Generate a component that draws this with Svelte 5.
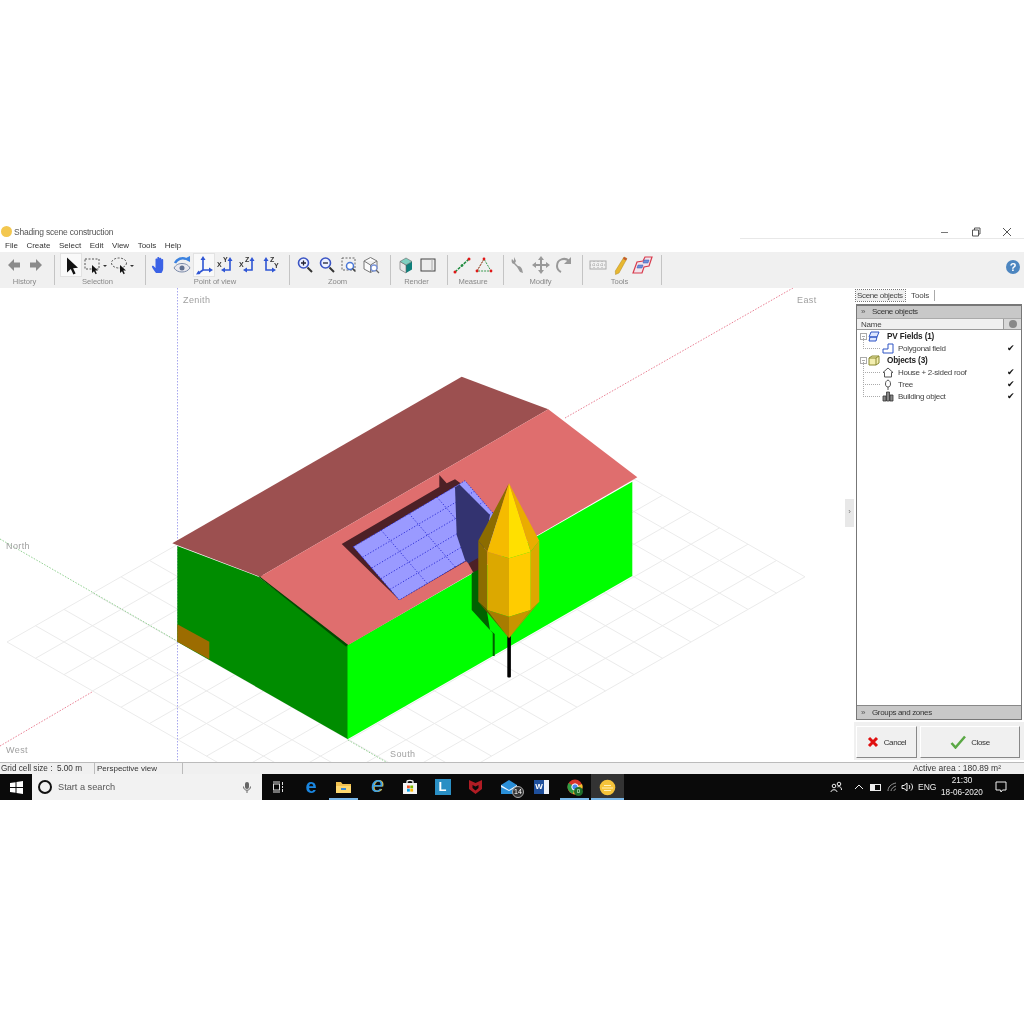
<script>
  // floor grid of the 3d scene, 16 x 12 cells
  const origin = [7, 642];
  const u = [28.5, -16.3];
  const v = [28.5, 16.3];
  const pt = (a, b) => [origin[0] + a * u[0] + b * v[0], origin[1] + a * u[1] + b * v[1]];
  const gridLines = [];
  for (let a = 0; a <= 16; a++) gridLines.push([pt(a, 0), pt(a, 12)]);
  for (let b = 0; b <= 12; b++) gridLines.push([pt(0, b), pt(16, b)]);

  // pv panel corners
  const A = [353.3, 546.7];
  const B = [465, 480.7];
  const D = [399.3, 600];
  const panelLines = [];
  const mix = (i, j) => [A[0] + i * (B[0] - A[0]) + j * (D[0] - A[0]), A[1] + i * (B[1] - A[1]) + j * (D[1] - A[1])];
  for (let i = 1; i < 4; i++) panelLines.push([mix(i / 4, 0), mix(i / 4, 1)]);
  for (let j = 1; j < 5; j++) panelLines.push([mix(0, j / 5), mix(1, j / 5)]);

  const menus = ["File", "Create", "Select", "Edit", "View", "Tools", "Help"];

  const treeRows = [
    { label: "PV Fields (1)", bold: true, kind: "pv" },
    { label: "Polygonal field", kind: "poly", check: true },
    { label: "Objects (3)", bold: true, kind: "obj" },
    { label: "House + 2-sided roof", kind: "house", check: true },
    { label: "Tree", kind: "tree", check: true },
    { label: "Building object", kind: "building", check: true }
  ];
</script>

{#snippet cursor(x, y)}
  <path d="M{x} {y}l0 8 2-1.8 1.6 3 1.2-.7-1.5-2.9 2.7-.2z" fill="#111" />
{/snippet}

<div class="screen">
  <div class="titlebar">
    <span class="app-dot"></span>
    <span class="title">Shading scene construction</span>
    <div class="win-btns">
      <svg width="10" height="10" viewBox="0 0 10 10"><path d="M1 5.5h7" stroke="#777" /></svg>
      <svg width="10" height="10" viewBox="0 0 10 10"><path d="M1.5 3h6v6h-6zM3.5 3V1h5.500v6H7.500" fill="none" stroke="#555" /></svg>
      <svg width="10" height="10" viewBox="0 0 10 10"><path d="M1 1l8 8M9 1l-8 8" stroke="#555" /></svg>
    </div>
  </div>

  <div class="menubar">
    {#each menus as name}
      <span>{name}</span>
    {/each}
  </div>

  <div class="toolbar">
    <div class="group w-history">
      <div class="icons">
        <div class="tool"><svg width="22" height="22" viewBox="0 0 22 22"><path d="M5 11l6-6v3.500h6v5h-6V17z" fill="#8b8b8b" /></svg></div>
        <div class="tool"><svg width="22" height="22" viewBox="0 0 22 22"><path d="M17 11l-6-6v3.500H5v5h6V17z" fill="#8b8b8b" /></svg></div>
      </div>
      <span class="group-label">History</span>
    </div>
    <div class="sep"></div>
    <div class="group w-selection">
      <div class="icons">
        <div class="tool active"><svg width="22" height="22" viewBox="0 0 22 22"><path d="M7 3.500v15l3.800-3.500 2.600 5.500 2.200-1-2.500-5.300 4.900-.4z" fill="#111" /></svg></div>
        <div class="tool"><svg width="22" height="22" viewBox="0 0 22 22"><rect x="3" y="5" width="14" height="10" fill="none" stroke="#555" stroke-dasharray="2 1.500" />{@render cursor(10, 11)}</svg></div>
        <div class="drop"></div>
        <div class="tool"><svg width="22" height="22" viewBox="0 0 22 22"><ellipse cx="10" cy="9" rx="7.500" ry="5" fill="none" stroke="#555" stroke-dasharray="2 1.500" />{@render cursor(11, 11)}</svg></div>
        <div class="drop"></div>
      </div>
      <span class="group-label">Selection</span>
    </div>
    <div class="sep"></div>
    <div class="group w-pov">
      <div class="icons">
        <div class="tool"><svg width="22" height="22" viewBox="0 0 22 22"><path d="M7 19c-1.500-2-3.500-4.500-4-6-.4-1.200 1-1.800 1.800-.8L6.500 14V5.500c0-1.300 1.800-1.300 1.800 0V4c0-1.300 2-1.300 2 0v.8c0-1.300 2-1.300 2 0V6c0-1.200 1.900-1.200 1.900 0v8c0 2-.7 3.500-1.700 5z" fill="#3b62e6" /></svg></div>
        <div class="tool"><svg width="22" height="22" viewBox="0 0 22 22"><path d="M3 14c2-3.500 5-4.500 8-4.500s6 1 8 4.500c-2 3-5 4-8 4s-6-1-8-4z" fill="#e8e8ee" stroke="#7a8aa8" /><circle cx="11" cy="14" r="2.500" fill="#5f6f8f" /><path d="M4 9c2-4 7-6 11-4" fill="none" stroke="#3b82e0" stroke-width="2.500" /><path d="M19 8V2l-6 3z" fill="#3b82e0" /></svg></div>
        <div class="tool active"><svg width="22" height="22" viewBox="0 0 22 22"><path d="M10 5v11M10 16h7M10 16l-5 3.500" fill="none" stroke="#2f55d4" stroke-width="1.600" /><path d="M10 2l2.500 4h-5zM20 16l-4-2.500v5zM3 20.500l4.500-.5-2-3.500z" fill="#2f55d4" /></svg></div>
        <div class="tool"><svg width="22" height="22" viewBox="0 0 22 22"><path d="M15 6v10H9" fill="none" stroke="#2f55d4" stroke-width="1.600" /><path d="M15 3l2.500 4h-5zM6 16l4-2.500v5z" fill="#2f55d4" /><text x="2" y="13" class="axis">X</text><text x="8" y="8" class="axis">Y</text></svg></div>
        <div class="tool"><svg width="22" height="22" viewBox="0 0 22 22"><path d="M15 6v10H9" fill="none" stroke="#2f55d4" stroke-width="1.600" /><path d="M15 3l2.500 4h-5zM6 16l4-2.500v5z" fill="#2f55d4" /><text x="2" y="13" class="axis">X</text><text x="8" y="8" class="axis">Z</text></svg></div>
        <div class="tool"><svg width="22" height="22" viewBox="0 0 22 22"><path d="M7 6v10h7" fill="none" stroke="#2f55d4" stroke-width="1.600" /><path d="M7 3l2.500 4h-5zM17 16l-4-2.500v5z" fill="#2f55d4" /><text x="11" y="8" class="axis">Z</text><text x="15" y="14" class="axis">Y</text></svg></div>
      </div>
      <span class="group-label">Point of view</span>
    </div>
    <div class="sep"></div>
    <div class="group w-zoom">
      <div class="icons">
        <div class="tool"><svg width="22" height="22" viewBox="0 0 22 22"><circle cx="9.500" cy="9" r="5" fill="#eef2ff" stroke="#3b55c4" stroke-width="1.600" /><path d="M7 9h5M9.500 6.500v5" stroke="#223" stroke-width="1.300" /><path d="M13.500 13.500l4.500 4.500" stroke="#333" stroke-width="2" /></svg></div>
        <div class="tool"><svg width="22" height="22" viewBox="0 0 22 22"><circle cx="9.500" cy="9" r="5" fill="#eef2ff" stroke="#3b55c4" stroke-width="1.600" /><path d="M7 9h5" stroke="#223" stroke-width="1.300" /><path d="M13.500 13.500l4.500 4.500" stroke="#333" stroke-width="2" /></svg></div>
        <div class="tool"><svg width="22" height="22" viewBox="0 0 22 22"><rect x="4" y="4" width="13" height="12" fill="none" stroke="#666" stroke-dasharray="2 1.500" /><circle cx="12" cy="12" r="3.500" fill="#fff" stroke="#4a78d8" stroke-width="1.500" /><path d="M14.500 14.500l3 3" stroke="#444" stroke-width="1.500" /></svg></div>
        <div class="tool"><svg width="22" height="22" viewBox="0 0 22 22"><path d="M4 7l6.500-3.500L17 7v8l-6.500 3.500L4 15zM4 7l6.500 4L17 7M10.500 11v7.500" fill="#fafafa" stroke="#777" /><circle cx="14" cy="14" r="3" fill="#fff" stroke="#7a94d8" stroke-width="1.300" /><path d="M16 16l3 3" stroke="#666" stroke-width="1.300" /></svg></div>
      </div>
      <span class="group-label">Zoom</span>
    </div>
    <div class="sep"></div>
    <div class="group w-render">
      <div class="icons">
        <div class="tool"><svg width="22" height="22" viewBox="0 0 22 22"><path d="M11 11l6-3.500v8L11 19z" fill="#0e7f7a" /><path d="M11 11L5 7.500v8L11 19z" fill="#e8e8e8" stroke="#666" stroke-width=".6" /><path d="M5 7.500L11 4l6 3.500L11 11z" fill="#7fd0c0" stroke="#666" stroke-width=".6" /></svg></div>
        <div class="tool"><svg width="22" height="22" viewBox="0 0 22 22"><rect x="4" y="5" width="14" height="12" fill="#ededed" stroke="#444" /><path d="M15 5v12" stroke="#aaa" /></svg></div>
      </div>
      <span class="group-label">Render</span>
    </div>
    <div class="sep"></div>
    <div class="group w-measure">
      <div class="icons">
        <div class="tool"><svg width="22" height="22" viewBox="0 0 22 22"><path d="M4 18L18 5" stroke="#1c8a3c" stroke-width="1.500" stroke-dasharray="3 1" /><circle cx="4" cy="18" r="1.500" fill="#e01818" /><circle cx="18" cy="5" r="1.500" fill="#e01818" /><circle cx="11" cy="11.500" r="1.300" fill="#1c8a3c" /></svg></div>
        <div class="tool"><svg width="22" height="22" viewBox="0 0 22 22"><path d="M11 5L4 17h14z" fill="none" stroke="#3a9a50" stroke-dasharray="2 1" /><path d="M11 5L4 17" stroke="#d84848" stroke-dasharray="2 1" /><circle cx="11" cy="5" r="1.400" fill="#e01818" /><circle cx="4" cy="17" r="1.400" fill="#e01818" /><circle cx="18" cy="17" r="1.400" fill="#e01818" /></svg></div>
      </div>
      <span class="group-label">Measure</span>
    </div>
    <div class="sep"></div>
    <div class="group w-modify">
      <div class="icons">
        <div class="tool"><svg width="22" height="22" viewBox="0 0 22 22"><path d="M6 3l2 4-1 2 3 3c2 0 3 1 4 3l1 4-3-1-3-5-3-3c-2 0-3-3-2-5l2 2z" fill="#999" /></svg></div>
        <div class="tool"><svg width="22" height="22" viewBox="0 0 22 22"><path d="M11 4v14M4 11h14" stroke="#999" stroke-width="2" /><path d="M11 2l3 4H8zM11 20l3-4H8zM2 11l4-3v6zM20 11l-4-3v6z" fill="#999" /></svg></div>
        <div class="tool"><svg width="22" height="22" viewBox="0 0 22 22"><path d="M17 7c-4-4-12-2-12 5 0 3 2 5 4 6" fill="none" stroke="#999" stroke-width="2" /><path d="M19 3v7h-7z" fill="#999" /></svg></div>
      </div>
      <span class="group-label">Modify</span>
    </div>
    <div class="sep"></div>
    <div class="group w-tools">
      <div class="icons">
        <div class="tool"><svg width="22" height="22" viewBox="0 0 22 22"><rect x="3" y="7" width="16" height="8" fill="none" stroke="#aaa" /><path d="M7 7v8M11 7v8M15 7v8M3 11h16" stroke="#aaa" stroke-dasharray="1 1" /></svg></div>
        <div class="tool"><svg width="22" height="22" viewBox="0 0 22 22"><path d="M15 3l3 1.500L10 19l-3.500 1.500-.2-3.500z" fill="#e8b830" stroke="#b08820" stroke-width=".5" /><path d="M15 3l3 1.500-1 2-3-1.500z" fill="#c65a30" /></svg></div>
        <div class="tool"><svg width="22" height="22" viewBox="0 0 22 22"><path d="M2 19l4-11 6-1 2-4h7l-3 9-5 1-2 6z" fill="#f2e4ec" stroke="#d83a4c" stroke-width="1.200" /><path d="M7 11h5l-1 3H6zM13 6h5l-1 3h-5z" fill="#6d8fd8" stroke="#3a55b0" stroke-width=".5" /></svg></div>
      </div>
      <span class="group-label">Tools</span>
    </div>
    <div class="sep"></div>
    <div class="help">?</div>
  </div>

  <div class="main">
    <div class="canvas">
      <svg class="scene" width="854" height="474" viewBox="0 288 854 474">
        {#each gridLines as [p, q]}
          <line x1={p[0]} y1={p[1]} x2={q[0]} y2={q[1]} stroke="#ebebeb" />
        {/each}

        <line x1="177.500" y1="288" x2="177.500" y2="762" stroke="#a6a6ee" stroke-dasharray="1.500 1.500" />
        <line x1="0" y1="539" x2="177" y2="641" stroke="#8fd08f" stroke-dasharray="1.500 1.500" />
        <line x1="348" y1="740" x2="386" y2="762" stroke="#8fd08f" stroke-dasharray="1.500 1.500" />
        <line x1="0" y1="746" x2="92" y2="692" stroke="#ea7f94" stroke-dasharray="1.500 1.500" />
        <line x1="565" y1="418" x2="793" y2="288" stroke="#ea7f94" stroke-dasharray="1.500 1.500" />

        <text x="183" y="303" class="axis-label">Zenith</text>
        <text x="797" y="303" class="axis-label">East</text>
        <text x="6" y="549" class="axis-label">North</text>
        <text x="6" y="753" class="axis-label">West</text>
        <text x="390" y="757" class="axis-label">South</text>

        <!-- house -->
        <polygon points="177.300,546 258.300,576.700 348,645 348,739.300 177.300,641.700" fill="#008c00" />
        <polygon points="258.300,576.700 262,575 349,645 346,646.500" fill="#004a00" />
        <polygon points="347.500,645 632.300,481.700 632.300,576 347.500,739.300" fill="#00ff00" />
        <polygon points="177.300,624.300 209.300,641.700 209.300,659.300 177.300,641.700" fill="#9c6c00" />
        <polygon points="172.300,543.300 461.700,376.700 548.300,409.300 260,576.700" fill="#9c5050" />
        <polygon points="260,576.700 548.300,409.300 637.300,477.300 348.300,645" fill="#df6e6e" />

        <!-- panel with its shadows -->
        <polygon points="341.700,544 439.300,487 439.300,475 446.700,483.300 455,479.300 470,490 470,559 399.300,600" fill="#4d2026" />
        <polygon points="353.300,546.700 465,480.700 511,534 399.300,600" fill="#9a9aff" />
        {#each panelLines as [p, q]}
          <line x1={p[0]} y1={p[1]} x2={q[0]} y2={q[1]} stroke="#3030d8" stroke-dasharray="1.200 1.800" />
        {/each}
        <polygon points="353.300,546.700 465,480.700 511,534 399.300,600" fill="none" stroke="#3030d8" stroke-dasharray="1.200 1.800" />
        <polygon points="455,487.300 459.500,484.500 490,515 480,570 468.300,563.300 465,560 456.700,535" fill="#333370" />
        <polygon points="468.300,563.500 478,558 482,572 473,572" fill="#4d2026" />
        <polygon points="471.700,573 480,569 490,630 494.700,634 494.700,656 492.700,656 492.700,633 471.700,610" fill="#006200" />

        <!-- tree -->
        <rect x="507.300" y="636" width="3.600" height="41.500" rx="1" fill="#000" />
        <polygon points="509,483.300 478.300,540.700 487.300,551.700" fill="#8c6c00" />
        <polygon points="509,483.300 487.300,551.700 509,558.300" fill="#f5bb00" />
        <polygon points="509,483.300 509,558.300 530.700,551.700" fill="#ffe000" />
        <polygon points="509,483.300 530.700,551.700 539.300,540.700" fill="#eaad00" />
        <polygon points="478.300,540.700 487.300,551.700 487.300,610 478.300,601.700" fill="#8c6c00" />
        <polygon points="487.300,551.700 509,558.300 509,616.700 487.300,610" fill="#dca800" />
        <polygon points="509,558.300 530.700,551.700 530.700,610 509,616.700" fill="#ffcc00" />
        <polygon points="530.700,551.700 539.300,540.700 539.300,601.700 530.700,610" fill="#dca800" />
        <polygon points="478.300,601.700 487.300,610 509,638.300" fill="#6a5000" />
        <polygon points="487.300,610 509,616.700 509,638.300" fill="#a87c00" />
        <polygon points="509,616.700 530.700,610 509,638.300" fill="#c89400" />
        <polygon points="530.700,610 539.300,601.700 509,638.300" fill="#b88c00" />
      </svg>
      <div class="collapse-handle">›</div>
    </div>

    <div class="side">
      <div class="tabs">
        <span class="tab current">Scene objects</span>
        <span class="tab tools-tab">Tools</span>
      </div>
      <div class="frame">
        <div class="frame-head"><span class="chev">»</span>Scene objects</div>
        <div class="name-row">
          <span>Name</span>
          <span class="name-btn"><span class="ball"></span></span>
        </div>
        <div class="tree">
          {#each treeRows as row}
            <div class="tree-row" class:parent={row.bold}>
              <span class="twig" class:root={row.bold}>
                {#if row.bold}<span class="plus-box"></span>{/if}
              </span>
              <svg class="tree-icon" width="12" height="11" viewBox="0 0 12 11">
                {#if row.kind === "pv"}
                  <path d="M3 1h8L9 6H1zM2 6h7L8 10H1z" fill="#dde6ff" stroke="#2f55c4" />
                {:else if row.kind === "poly"}
                  <path d="M1 10V6h5V1h5v9z" fill="#fff" stroke="#2f55c4" />
                {:else if row.kind === "obj"}
                  <path d="M1 3l3-2h7v7l-3 2H1zM1 3h7v7M8 3l3-2" fill="#f3eeb0" stroke="#8a8a30" />
                {:else if row.kind === "house"}
                  <path d="M6 1L1 5.500h1.500V10h7V5.500H11z" fill="#fff" stroke="#555" />
                {:else if row.kind === "tree"}
                  <path d="M6 1c2 1 2.500 2 2.500 4S7.500 8 6 8 3.500 7 3.500 5 4 2 6 1zM6 8v3" fill="#fff" stroke="#555" />
                {:else}
                  <path d="M1 5h3v5H1zM4.500 1h3v9h-3zM8 4h3v6H8z" fill="#888" stroke="#333" stroke-width=".8" />
                {/if}
              </svg>
              <span class="tree-label">{row.label}</span>
              {#if row.check}<span class="check">✔</span>{/if}
            </div>
          {/each}
        </div>
        <div class="frame-foot"><span class="chev">»</span>Groups and zones</div>
      </div>
      <div class="actions">
        <div class="action cancel">
          <svg width="12" height="12" viewBox="0 0 12 12"><path d="M2 2l8 8M10 2l-8 8" stroke="#e01010" stroke-width="3" /></svg>
          <span>Cancel</span>
        </div>
        <div class="action close">
          <svg width="16" height="14" viewBox="0 0 16 14"><path d="M1.500 8l4 4.500L15 1.500" fill="none" stroke="#5aa845" stroke-width="2.500" /></svg>
          <span>Close</span>
        </div>
      </div>
    </div>
  </div>

  <div class="statusbar">
    <span class="cell c-grid">Grid cell size :  5.00 m</span>
    <span class="cell c-view">Perspective view</span>
    <span class="cell c-area">Active area : 180.89 m²</span>
  </div>

  <div class="taskbar">
    <div class="start">
      <svg width="13" height="13" viewBox="0 0 13 13"><path d="M0 2l5.500-.8V6H0zM6.500 1l6.500-1v6H6.500zM0 7h5.500v4.800L0 11zM6.500 7H13v6l-6.500-1z" fill="#fff" /></svg>
    </div>
    <div class="search">
      <span class="ring"></span>
      <span class="search-text">Start a search</span>
      <svg class="mic" width="10" height="13" viewBox="0 0 10 13"><rect x="3" y="1" width="4" height="7" rx="2" fill="#666" /><path d="M1.500 5.500c0 5 7 5 7 0M5 9.500V12" fill="none" stroke="#666" /></svg>
    </div>
    <div class="task-icons">
      <div class="tb"><svg width="12" height="12" viewBox="0 0 12 12"><path d="M1 1h7M1 11h7" stroke="#ddd" /><rect x="1.500" y="3" width="6" height="6" fill="none" stroke="#ddd" /><path d="M10.500 1v3M10.500 5v2M10.500 8v3" stroke="#ddd" /></svg></div>
      <div class="tb"><span class="edge">e</span></div>
      <div class="tb open"><svg width="17" height="14" viewBox="0 0 17 14"><path d="M1 2h5l1.500 2H16v9H1z" fill="#f0c050" /><path d="M1 6h15v7H1z" fill="#ffd970" /><path d="M6 8h5v2H6z" fill="#3a8ad8" /></svg></div>
      <div class="tb"><span class="ie">e</span></div>
      <div class="tb"><svg width="16" height="16" viewBox="0 0 16 16"><path d="M1 4h14v11H1z" fill="#f4f4f4" /><path d="M5 5V2.500C5 1 11 1 11 2.500V5" fill="none" stroke="#f4f4f4" stroke-width="1.300" /><rect x="5" y="6.500" width="2.800" height="2.800" fill="#f25022" /><rect x="8.300" y="6.500" width="2.800" height="2.800" fill="#7fba00" /><rect x="5" y="9.800" width="2.800" height="2.800" fill="#00a4ef" /><rect x="8.300" y="9.800" width="2.800" height="2.800" fill="#ffb900" /></svg></div>
      <div class="tb"><span class="l-tile">L</span></div>
      <div class="tb"><svg width="15" height="16" viewBox="0 0 15 16"><path d="M1 1l6.500 3L14 1v9l-6.500 5L1 10z" fill="#b01c24" /><path d="M4.500 6l3 1.500 3-1.500v3l-3 2.500-3-2.500z" fill="#0a0a0a" /></svg></div>
      <div class="tb">
        <svg width="18" height="14" viewBox="0 0 18 14"><path d="M1 5l8-5 8 5v9H1z" fill="#2a8fd8" /><path d="M1 5l8 5 8-5v2l-8 4-8-4z" fill="#e8f4ff" /></svg>
        <span class="badge">14</span>
      </div>
      <div class="tb"><span class="word"><span class="w">W</span></span></div>
      <div class="tb open"><svg width="16" height="16" viewBox="0 0 16 16"><circle cx="8" cy="8" r="7.500" fill="#d8362a" /><path d="M8 8L1.500 4A7.500 7.500 0 0 0 6 15z" fill="#2f9e44" /><path d="M8 8l-2 7A7.500 7.500 0 0 0 15 5z" fill="#f2c230" /><circle cx="8" cy="8" r="3.200" fill="#4a8af0" stroke="#fff" /></svg><span class="zero">0</span></div>
      <div class="tb open current"><svg width="17" height="17" viewBox="0 0 17 17"><circle cx="8.500" cy="8.500" r="7.800" fill="#f5c33a" /><path d="M3 9h11M5 6.500h7M5 11.500h7" stroke="#fff1b8" /></svg></div>
    </div>
    <div class="tray">
      <svg class="t-people" width="13" height="12" viewBox="0 0 13 12"><circle cx="4" cy="5" r="1.800" fill="none" stroke="#eee" /><path d="M1 11c0-3 6-3 6 0" fill="none" stroke="#eee" /><circle cx="9" cy="3" r="1.800" fill="none" stroke="#eee" /><path d="M7.500 6c2-1 4 0 4 3" fill="none" stroke="#eee" /></svg>
      <svg class="t-chev" width="10" height="6" viewBox="0 0 10 6"><path d="M1 5l4-4 4 4" fill="none" stroke="#eee" /></svg>
      <svg class="t-batt" width="11" height="7" viewBox="0 0 11 7"><rect x=".5" y=".5" width="10" height="6" fill="none" stroke="#eee" /><rect x="1" y="1" width="4" height="5" fill="#eee" /></svg>
      <svg class="t-wifi" width="11" height="10" viewBox="0 0 11 10"><path d="M1 9c0-4 3-7 8-8M4 9c0-2 2-4 5-5M7 9c0-1 1-2 2-2" fill="none" stroke="#999" /></svg>
      <svg class="t-vol" width="12" height="10" viewBox="0 0 12 10"><path d="M1 3.500h2L6 1v8L3 6.500H1z" fill="none" stroke="#eee" /><path d="M8 3c1 1 1 3 0 4M10 1.500c2 2 2 5 0 7" fill="none" stroke="#eee" /></svg>
      <span class="t-lang">ENG</span>
      <div class="t-clock"><span>21:30</span><span>18-06-2020</span></div>
      <svg class="t-note" width="12" height="12" viewBox="0 0 12 12"><path d="M1 1h10v8H7.500L6 11 5.500 9H1z" fill="none" stroke="#eee" /></svg>
    </div>
  </div>
</div>

<style>
  :global(body) {
    margin: 0;
    background: #fff;
  }

  /* the source is a scaled down capture, so everything is a bit soft */
  .screen {
    width: 1024px;
    height: 1024px;
    padding-top: 224px;
    box-sizing: border-box;
    display: flex;
    flex-direction: column;
    font-family: "Liberation Sans", Arial, sans-serif;
    font-size: 8px;
    color: #333;
    background: #fff;
    overflow: hidden;
    filter: blur(.35px);
  }

  .titlebar {
    height: 15px;
    display: flex;
    align-items: center;
    padding-left: 1px;
    position: relative;
    flex: none;
  }
  .titlebar::after {
    content: "";
    position: absolute;
    right: 0;
    bottom: 0;
    width: 284px;
    height: 1px;
    background: #e8e8e8;
  }
  .app-dot {
    width: 11px;
    height: 11px;
    border-radius: 50%;
    background: #f3c74f;
    margin-right: 2px;
  }
  .title {
    color: #555;
    font-size: 8.5px;
    letter-spacing: -.2px;
  }
  .win-btns {
    margin-left: auto;
    display: flex;
    gap: 21px;
    padding-right: 12px;
  }

  .menubar {
    height: 13px;
    flex: none;
    display: flex;
    align-items: center;
    padding-left: 5px;
    gap: 8.5px;
    color: #333;
  }

  .toolbar {
    height: 36px;
    flex: none;
    background: #f0f0f0;
    display: flex;
    align-items: center;
    position: relative;
  }
  .group {
    height: 36px;
    box-sizing: border-box;
    padding-right: 5px;
    display: flex;
    flex-direction: column;
    align-items: center;
  }
  .icons {
    display: flex;
    height: 24px;
    margin-top: 1px;
    align-items: center;
  }
  .group-label {
    font-size: 7.6px;
    line-height: 9px;
    letter-spacing: -.05px;
    color: #888;
  }
  .tool {
    width: 22px;
    height: 24px;
    display: flex;
    align-items: center;
    justify-content: center;
    flex: none;
  }
  .tool.active {
    background: #f9f9f9;
    outline: 1px solid #e2e2e2;
    outline-offset: -1px;
  }
  .drop {
    width: 0;
    height: 0;
    border-left: 2px solid transparent;
    border-right: 2px solid transparent;
    border-top: 2px solid #333;
    margin: 2px 2px 0 -1px;
  }
  .sep {
    width: 1px;
    height: 30px;
    background: #c4c4c4;
    flex: none;
  }
  .w-history { width: 54px; }
  .w-selection { width: 90px; }
  .w-pov { width: 143px; }
  .w-zoom { width: 100px; }
  .w-render { width: 56px; }
  .w-measure { width: 55px; }
  .w-modify { width: 78px; }
  .w-tools { width: 78px; }
  .axis {
    font-size: 7px;
    font-weight: 700;
    fill: #333;
  }
  .help {
    position: absolute;
    left: 1006px;
    top: 8px;
    width: 14px;
    height: 14px;
    border-radius: 50%;
    background: #4d86c0;
    color: #fff;
    font-size: 11px;
    font-weight: 700;
    line-height: 14px;
    text-align: center;
  }

  .main {
    flex: none;
    height: 474px;
    display: flex;
  }
  .canvas {
    width: 854px;
    height: 474px;
    position: relative;
    flex: none;
  }
  .scene {
    display: block;
  }
  .axis-label {
    font-size: 9px;
    letter-spacing: .4px;
    fill: #a0a0a0;
  }
  .collapse-handle {
    position: absolute;
    left: 845px;
    top: 211px;
    width: 9px;
    height: 28px;
    background: #e8e8e8;
    color: #777;
    font-size: 8px;
    line-height: 26px;
    text-align: center;
  }

  .side {
    width: 170px;
    flex: none;
    display: flex;
    flex-direction: column;
  }
  .tabs {
    height: 14px;
    margin: 2px 0 0 2px;
    display: flex;
    gap: 5px;
  }
  .tab {
    height: 11px;
    line-height: 11px;
    padding: 0 1px;
    color: #444;
    font-size: 8px;
    letter-spacing: -.35px;
  }
  .tab.current {
    outline: 1px dotted #777;
    background: #f0f0f0;
    width: 47px;
    white-space: nowrap;
  }
  .tools-tab {
    width: 22px;
    border-right: 1px solid #aaa;
    letter-spacing: -.1px;
  }
  .frame {
    margin-left: 2px;
    width: 166px;
    height: 416px;
    box-sizing: border-box;
    border: 1px solid #777;
    border-top-width: 2px;
    display: flex;
    flex-direction: column;
    background: #fff;
  }
  .frame-head,
  .frame-foot {
    height: 12px;
    line-height: 12px;
    background: #c8c8c8;
    color: #333;
    flex: none;
    padding-left: 4px;
    white-space: nowrap;
    font-size: 8px;
    letter-spacing: -.35px;
  }
  .frame-foot {
    height: 13px;
    line-height: 13px;
    border-top: 1px solid #888;
  }
  .chev {
    display: inline-block;
    width: 11px;
    color: #555;
  }
  .name-row {
    height: 12px;
    line-height: 11px;
    flex: none;
    background: #f0f0f0;
    border-bottom: 1px solid #999;
    border-top: 1px solid #aaa;
    box-sizing: border-box;
    padding-left: 4px;
    display: flex;
    justify-content: space-between;
    color: #444;
    font-size: 8px;
    letter-spacing: -.25px;
  }
  .name-btn {
    width: 17px;
    background: #d8d8d8;
    border-left: 1px solid #999;
    display: flex;
    align-items: center;
    justify-content: center;
  }
  .ball {
    width: 8px;
    height: 8px;
    border-radius: 50%;
    background: #888;
  }
  .tree {
    flex: 1;
  }
  .tree-row {
    height: 12px;
    display: flex;
    align-items: center;
    padding-right: 6px;
    color: #444;
    font-size: 8px;
    letter-spacing: -.3px;
  }
  .tree-row.parent .tree-label {
    font-weight: 700;
    font-size: 8.2px;
    letter-spacing: -.15px;
    color: #222;
    margin-left: 4px;
  }
  .twig {
    width: 26px;
    height: 12px;
    flex: none;
    position: relative;
  }
  .twig::before {
    content: "";
    position: absolute;
    left: 6px;
    top: -6px;
    height: 12px;
    width: 16px;
    border-left: 1px dotted #aaa;
    border-bottom: 1px dotted #aaa;
  }
  .twig.root {
    width: 11px;
  }
  .twig.root::before {
    width: 3px;
    border-left: none;
  }
  .plus-box {
    position: absolute;
    left: 3px;
    top: 3px;
    width: 5px;
    height: 5px;
    border: 1px solid #aaa;
    background: linear-gradient(#aaa, #aaa) center / 3px 1px no-repeat #fff;
  }
  .tree-icon {
    flex: none;
    margin-right: 3px;
  }
  .check {
    margin-left: auto;
    font-size: 9px;
    color: #111;
  }
  .tree-row:not(.parent) .tree-icon {
    margin-left: -1px;
    margin-right: 4px;
  }
  .actions {
    height: 38px;
    margin-top: 2px;
    padding: 4px 4px 0 2px;
    box-sizing: border-box;
    background: #f0f0f0;
    display: flex;
    gap: 3px;
  }
  .action {
    height: 32px;
    box-sizing: border-box;
    border-right: 1px solid #888;
    border-bottom: 1px solid #888;
    border-top: 1px solid #fff;
    border-left: 1px solid #fff;
    display: flex;
    align-items: center;
    justify-content: center;
    gap: 5px;
    color: #333;
    font-size: 8px;
    letter-spacing: -.4px;
  }
  .cancel {
    width: 61px;
  }
  .close {
    width: 100px;
  }

  .statusbar {
    height: 12px;
    flex: none;
    box-sizing: border-box;
    display: flex;
    background: #f0f0f0;
    border-top: 1px solid #bbb;
    line-height: 11px;
    color: #333;
    font-size: 8.2px;
  }
  .cell {
    border-right: 1px solid #bbb;
    padding-left: 1px;
    white-space: pre;
  }
  .c-grid { width: 93px; }
  .c-view { width: 85px; margin-left: 1px; font-size: 8px; }
  .c-area { flex: 1; text-align: right; padding-right: 23px; border-right: none; font-size: 8.5px; }

  .taskbar {
    height: 26px;
    flex: none;
    background: #0a0a0a;
    display: flex;
    align-items: center;
    color: #eee;
  }
  .start {
    width: 32px;
    display: flex;
    justify-content: center;
  }
  .search {
    width: 230px;
    height: 26px;
    background: #f2f2f2;
    display: flex;
    align-items: center;
    color: #555;
    font-size: 9.2px;
    flex: none;
  }
  .ring {
    width: 10px;
    height: 10px;
    border: 2px solid #111;
    border-radius: 50%;
    margin: 0 6px 0 6px;
  }
  .mic {
    margin-left: auto;
    margin-right: 10px;
  }
  .task-icons {
    display: flex;
    align-items: center;
    margin-left: -1px;
    height: 26px;
  }
  .tb {
    width: 33px;
    height: 26px;
    display: flex;
    align-items: center;
    justify-content: center;
    position: relative;
    box-sizing: border-box;
  }
  .tb.open::after {
    content: "";
    position: absolute;
    left: 2px;
    right: 2px;
    bottom: 0;
    height: 2px;
    background: #7ab8ea;
  }
  .tb.current {
    background: #333;
  }
  .tb.current::after {
    left: 0;
    right: 0;
  }
  .edge {
    color: #1a86e0;
    font-size: 20px;
    font-weight: 700;
    line-height: 22px;
    margin: -3px 0 0 1px;
  }
  .ie {
    color: #3aa0e8;
    font-size: 22px;
    font-style: italic;
    line-height: 24px;
    margin: -4px 0 0 1px;
    text-shadow: 1px 0 #e8c040;
  }
  .l-tile {
    width: 16px;
    height: 16px;
    background: #2a8fc4;
    color: #fff;
    font-size: 13px;
    font-weight: 700;
    line-height: 16px;
    text-align: center;
  }
  .badge {
    position: absolute;
    right: 1px;
    bottom: 2px;
    width: 12px;
    height: 12px;
    border-radius: 50%;
    background: #333;
    border: 1px solid #aaa;
    box-sizing: border-box;
    color: #fff;
    font-size: 7px;
    line-height: 10px;
    text-align: center;
  }
  .word {
    width: 15px;
    height: 14px;
    background: #eef2fa;
    display: flex;
    position: relative;
  }
  .w {
    width: 10px;
    height: 14px;
    background: #1e4f9c;
    color: #fff;
    font-size: 8px;
    font-weight: 700;
    line-height: 14px;
    text-align: center;
  }
  .zero {
    position: absolute;
    right: 8px;
    bottom: 4px;
    width: 9px;
    height: 9px;
    border-radius: 50%;
    background: #1f6e2c;
    color: #dfd;
    font-size: 6px;
    line-height: 9px;
    text-align: center;
  }
  .tray {
    margin-left: auto;
    height: 26px;
    width: 194px;
    display: flex;
    align-items: center;
    flex: none;
  }
  .t-chev { margin-left: 11px; }
  .t-batt { margin-left: 6px; }
  .t-wifi { margin-left: 6px; }
  .t-vol { margin-left: 3px; }
  .t-lang { margin-left: 5px; font-size: 8.5px; width: 18px; }
  .t-clock {
    width: 50px;
    margin-left: 1px;
    display: flex;
    flex-direction: column;
    align-items: center;
    font-size: 8.2px;
    line-height: 12px;
  }
  .t-note { margin-left: 8px; }
</style>
